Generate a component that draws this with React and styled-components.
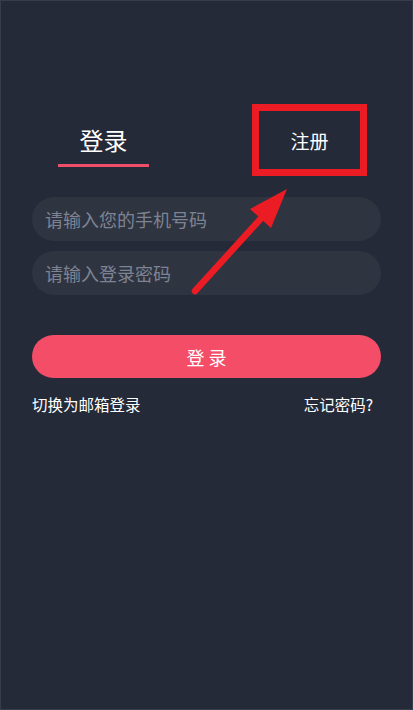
import React, { useState } from "react";
import styled, { createGlobalStyle } from "styled-components";

const GlobalStyle = createGlobalStyle`
    html, body {
        margin: 0;
        padding: 0;
        background: #252a38;
    }
    * {
        box-sizing: border-box;
    }
`

const Page = styled.div`
    position: relative;
    width: 413px;
    min-height: 710px;
    background: #252a38;
    border: 1px solid #383d4b;
    padding: 103px 31px 0;
    font-family: "Noto Sans CJK SC", "Noto Sans", sans-serif;
    color: #fff;
`
const Tabs = styled.div`
    display: flex;
    justify-content: space-between;
    align-items: flex-start;
    height: 72px;
    padding: 0 14px 0 26px;
`
const LoginTab = styled.div`
    width: 91px;
    padding-top: 22px;
    display: flex;
    flex-direction: column;
    align-items: center;
    cursor: pointer;
`
const LoginLabel = styled.span`
    font-size: 24px;
    line-height: 28px;
`
const Underline = styled.div`
    width: 100%;
    height: 3px;
    margin-top: 10px;
    background: #ef4e69;
`
const RegisterTab = styled.div`
    width: 115px;
    height: 72px;
    border: 7px solid #ec1c24;
    display: flex;
    align-items: center;
    justify-content: center;
    font-size: 19px;
    cursor: pointer;
`
const Form = styled.div`
    display: flex;
    flex-direction: column;
    gap: 10px;
    margin-top: 21px;
`
const Field = styled.input`
    height: 44px;
    width: 100%;
    border: none;
    outline: none;
    border-radius: 22px;
    background: #2f3441;
    padding: 0 13px;
    font-family: inherit;
    font-size: 18px;
    color: #fff;
    &::placeholder {
        color: #7e8393;
    }
`
const SubmitButton = styled.button`
    margin-top: 40px;
    width: 100%;
    height: 43px;
    border: none;
    border-radius: 22px;
    background: #f34d68;
    color: #fff;
    font-family: inherit;
    font-size: 18px;
    cursor: pointer;
`
const Links = styled.div`
    display: flex;
    justify-content: space-between;
    align-items: center;
    margin-top: 16px;
    padding-right: 8px;
    font-size: 15.5px;
    line-height: 20px;
`
const TextLink = styled.a`
    color: #fff;
    text-decoration: none;
    cursor: pointer;
`
const Pointer = styled.svg`
    position: absolute;
    left: 0;
    top: 0;
    pointer-events: none;
`

export default function App() {
    const [tab, setTab] = useState("login");
    return (
        <Page>
            <GlobalStyle />
            <Tabs>
                <LoginTab onClick={() => setTab("login")}>
                    <LoginLabel>登录</LoginLabel>
                    {tab === "login" && <Underline />}
                </LoginTab>
                <RegisterTab onClick={() => setTab("register")}>注册</RegisterTab>
            </Tabs>
            <Form>
                <Field type="tel" placeholder="请输入您的手机号码" />
                <Field type="password" placeholder="请输入登录密码" />
            </Form>
            <SubmitButton>登 录</SubmitButton>
            <Links>
                <TextLink>切换为邮箱登录</TextLink>
                <TextLink>忘记密码?</TextLink>
            </Links>
            {/* red annotation arrow pointing at the register tab */}
            <Pointer width="413" height="710" viewBox="0 0 413 710">
                <line x1="194" y1="290" x2="264" y2="213" stroke="#ec1c24" strokeWidth="6.5" strokeLinecap="round" />
                <polygon points="286,188 249,208 270,227" fill="#ec1c24" />
            </Pointer>
        </Page>
    )
}
